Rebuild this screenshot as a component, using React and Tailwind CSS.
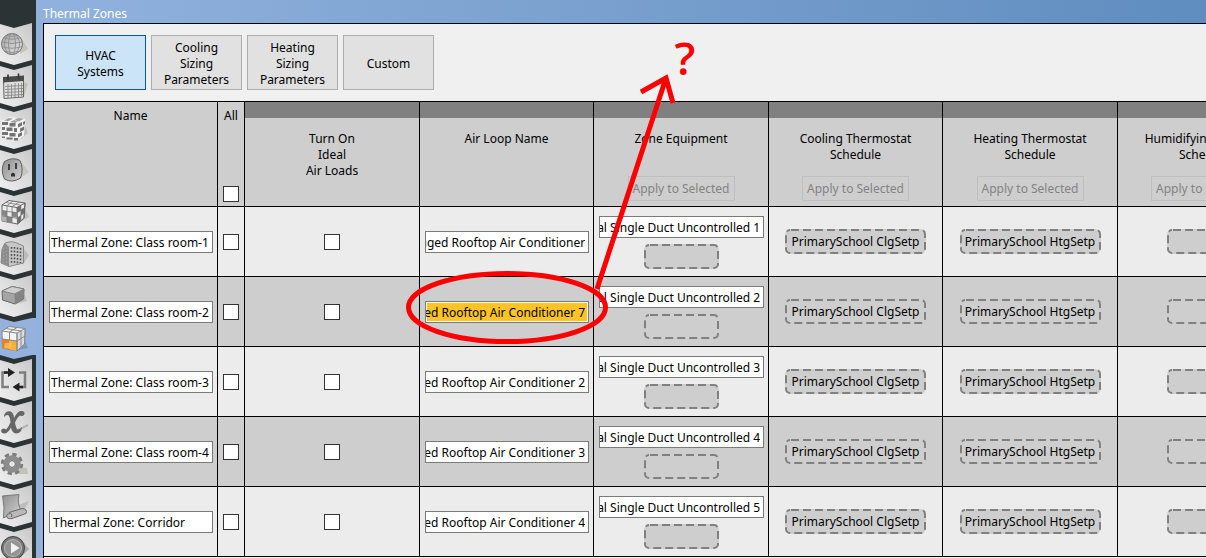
import { useEffect, useRef } from 'react'

const tabs = [
  { selected: true, lines: ['HVAC', 'Systems'] },
  { lines: ['Cooling', 'Sizing', 'Parameters'] },
  { lines: ['Heating', 'Sizing', 'Parameters'] },
  { lines: ['Custom'] }
]

const columns = [
  { title: ['Turn On', 'Ideal', 'Air Loads'], width: 'w-[175px]' },
  { title: ['Air Loop Name'], width: 'w-[174px]' },
  { title: ['Zone Equipment'], width: 'w-[175px]', apply: true },
  { title: ['Cooling Thermostat', 'Schedule'], width: 'w-[174px]', apply: true },
  { title: ['Heating Thermostat', 'Schedule'], width: 'w-[175px]', apply: true },
  { title: ['Humidifying Setpoint', 'Schedule'], width: 'w-[174px]', apply: true }
]

const rows = [
  { name: 'Thermal Zone: Class room-1', loop: 'Packaged Rooftop Air Conditioner', equipment: 'Air Terminal Single Duct Uncontrolled 1' },
  { name: 'Thermal Zone: Class room-2', loop: 'Packaged Rooftop Air Conditioner 7', equipment: 'Air Terminal Single Duct Uncontrolled 2', marked: true },
  { name: 'Thermal Zone: Class room-3', loop: 'Packaged Rooftop Air Conditioner 2', equipment: 'Air Terminal Single Duct Uncontrolled 3' },
  { name: 'Thermal Zone: Class room-4', loop: 'Packaged Rooftop Air Conditioner 3', equipment: 'Air Terminal Single Duct Uncontrolled 4' },
  { name: 'Thermal Zone: Corridor', loop: 'Packaged Rooftop Air Conditioner 4', equipment: 'Air Terminal Single Duct Uncontrolled 5' }
]

function GlobeIcon() {
  return (
    <g>
      <path d="M20 31 L28 26 L21 14Z" fill="#b9b9ac" opacity=".7" />
      <circle cx="12" cy="21" r="10.5" fill="url(#globe)" stroke="#777" />
      <g fill="none" stroke="#868686" strokeWidth=".8">
        <ellipse cx="12" cy="21" rx="3.5" ry="10.5" />
        <ellipse cx="12" cy="21" rx="7.5" ry="10.5" />
        <path d="M3.5 14.5Q12 18 20.5 14.5M2 19Q12 22 22 19M2 23.5Q12 27 22 23.5M4.5 28Q12 31 19.5 28M6 12.5Q12 14.5 18 12.5" />
      </g>
    </g>
  )
}

function CalendarIcon() {
  return (
    <g>
      <path d="M24 32 L28 19 L23 16Z" fill="#b9b9ac" opacity=".7" />
      <path d="M3.5 14L23.5 12L23.5 32L4 33.5Z" fill="#ddd" stroke="#666" />
      <path d="M3 12L24 10.5V16L3 17.5Z" fill="#4a4a4a" />
      <path d="M8 9.5v5M18.5 8.5v5" stroke="#333" strokeWidth="1.6" />
      <path d="M5 21.5L23 20.5M5 24.5L23 23.5M5 27.5L23 26.5M5 30.5L23 29.5M8 19v14M11.5 19v14M15 18v14M18.5 18v14M21.5 18v13" stroke="#808080" strokeWidth=".8" />
    </g>
  )
}

function BrickIcon() {
  return (
    <g>
      <path d="M21 32L28 26L24 16Z" fill="#aaa" opacity=".6" />
      <path d="M2 14L10 10L25 12L24 29L17 33L2 29Z" fill="#f3f3f3" />
      <path d="M2 15h6v3H2zM9.5 16h6v3.5h-6zM2 20h3v3H2zM6.5 20.5h6v3.5h-6zM14 21h3v4h-3zM2 25h6v3H2zM9.5 26h6v3.5h-6zM2 29.5h3v1.5H2zM6.5 30.5h6v2h-6zM18 17l4-2v3.5l-4 2zM23 15l2-1v3l-2 1zM18 27l4-2v3.5l-4 2zM20 21.5l4-2v3.5l-4 2zM14 31h4v2.5h-4z" fill="#747474" />
      <path d="M4 13.5l5-2.5 4 .8-5 2.5zM14.5 12l5-1 4 1-5 2.5zM10 15l4-2 4 1-3 2z" fill="#a2a2a2" />
    </g>
  )
}

function SocketIcon() {
  return (
    <g>
      <path d="M18 31L29 23L22 14Z" fill="#b9b9ac" opacity=".6" />
      <path d="M4.5 12.5Q13 7.5 20 11.5Q24 20 20.5 29Q12 34.5 4.5 30Q0 21 4.5 12.5Z" fill="url(#metal)" stroke="#5d5d5d" />
      <path d="M9 15v6M16 14v6" stroke="#333" strokeWidth="1.8" />
      <path d="M11 27.5V25q2-2.5 4 0v2.5z" fill="#333" />
    </g>
  )
}

function CubeIcon() {
  return (
    <g>
      <path d="M19 32L29 26L24 15Z" fill="#aaa" opacity=".6" />
      <path d="M2 14L9 9.5L25 12L24 27L17.5 33L2 30Z" fill="#ededed" stroke="#666" />
      <path d="M2 14L17 16.5L25 12L24 27L17.5 33L17 16.5" fill="none" stroke="#666" />
      <path d="M2 19.5l5 .8v5l-5-.8zM7 25.2l5 .8v6l-5-1zM12 20.7l5 .8v5l-5-.8z" fill="#858585" />
      <path d="M17 16.5l4-2.3v5l-4 2.8zM21 19l3.5-2.5-.3 5.5-3.2 2zM17.5 27l3.5-3v6l-3.5 3z" fill="#6e6e6e" />
      <path d="M2 24.5l5 .7v5.8l-5-1z" fill="#b4b4b4" />
      <path d="M2 19.5L17 21.8L24.5 16.8M2 24.8L17 27.3L24.3 22M7 14.8v16M12 15.5v16.5M20.8 14.5v15.5M6 11.5l15 2.7M13 10l-6 4.8M19 11l-7 4.7" fill="none" stroke="#777" strokeWidth=".8" />
    </g>
  )
}

function BuildingIcon() {
  return (
    <g>
      <path d="M23 32L29 22L23 15Z" fill="#aaa" opacity=".6" />
      <path d="M2 16L5 10Q12 7 19 11L23.5 13L23.5 30L9 33.5L1 30Z" fill="#c6c6c6" stroke="#777" strokeWidth=".8" />
      <path d="M2 16L5 10L9 14L9 33.5L1 30Z" fill="#8c8c8c" />
      <g stroke="#4c4c4c" strokeWidth="1.5" strokeDasharray="1.8 1.7">
        <path d="M11.5 14v17M14.5 14v17M17.5 14.5v16M20.5 15v15" />
      </g>
      <path d="M3.5 15v15M6.5 14v18" stroke="#a5a5a5" strokeDasharray="1.8 1.7" />
    </g>
  )
}

function BoxIcon() {
  return (
    <g>
      <path d="M16 29L27 26L24 18Z" fill="#aaa" opacity=".6" />
      <path d="M2 16L12 11.5L24 14L23.5 24L15 29L2.5 25Z" fill="#a5a5a5" stroke="#666" />
      <path d="M2 16L12 11.5L24 14L14.5 19Z" fill="#d0d0d0" stroke="#777" strokeWidth=".8" />
      <path d="M14.5 19L24 14L23.5 24L15 29Z" fill="#858585" />
    </g>
  )
}

function ZonesIcon() {
  return (
    <g>
      <path d="M18 33L28 31L24 22Z" fill="#6e8fb5" opacity=".7" />
      <path d="M2 14L9 9.5L25 11.5L24.5 27L17 34L2.5 31Z" fill="#f2f2f2" stroke="#888" />
      <path d="M9.5 23L17 24V34L9.5 32.5Z" fill="#f6ae3c" />
      <path d="M2.5 22L9.5 23V32.5L2.5 31Z" fill="#f08019" />
      <path d="M5 26L12 25.5L10.5 32L4 31Z" fill="#ffc95c" opacity=".7" />
      <path d="M17 16L25 11.5L24.5 27L17 34Z" fill="#dcdcdc" stroke="#888" />
      <path d="M2 14L17 16M2 22L17 24L25 19M9.5 15V23M17 16V34M21 14V30M9.5 15L17 10.5M6 11.5L21 14" fill="none" stroke="#888" />
    </g>
  )
}

function LoopIcon() {
  return (
    <g fill="none" strokeWidth="2.5">
      <path d="M2.5 25V13.5H7M19 13.5H25V28H21M9 28H2.5V23" stroke="#7e7e7e" />
      <path d="M4 13.5H9M18 28H23" stroke="#222" />
      <path d="M8 9L15 13.5L8 18ZM19.5 23.5L12.5 28L19.5 32.5Z" fill="#222" />
    </g>
  )
}

function VariableIcon() {
  return (
    <g>
      <path d="M18 29L28 24" stroke="#b5b5b5" strokeWidth="2" />
      <path d="M4 14.5Q6 9.5 10.5 10.5Q13.5 11.5 14 17Q17 11 20.5 10Q25 9.500 24.5 13Q23.5 16 20 14.500Q17.5 16 15 21.500Q16 28 18 28.500Q20 28.500 22 26Q21.500 32.500 16 32.500Q12 32 11 26.500Q8 32.500 4 32.500Q0 31.500 1.500 28.500Q3.500 26.500 6 28.500Q8.500 26 10.500 21.500Q10 14 7.500 14Q5.500 14 4 16Z" fill="#666" />
    </g>
  )
}

function GearIcon() {
  return (
    <g>
      <path d="M14 31L28 31L27 25L20 24Z" fill="#bdbcad" opacity=".8" />
      <circle cx="12" cy="21" r="9.5" fill="none" stroke="#7d7d7d" strokeWidth="3.500" strokeDasharray="4.200 3.260" />
      <circle cx="12" cy="21" r="6.2" fill="none" stroke="#8c8c8c" strokeWidth="5" />
      <circle cx="12" cy="21" r="3.4" fill="#e6e6e6" stroke="#666" />
    </g>
  )
}

function ScriptIcon() {
  return (
    <g>
      <path d="M18 20L29 16L24 25Z" fill="#aaa" opacity=".6" />
      <path d="M2.5 11L19 9.5Q17 18 20.5 24L9 30L3.5 33Q5 22 2.5 11Z" fill="url(#metal)" stroke="#777" />
      <path d="M9 27.5L22 23.5Q28 24 26 28.5L12 33.5Q7 34.5 6.5 31Q7 28 10.5 28.5Q13 29.5 11.5 32" fill="#b9b9b9" stroke="#666" />
    </g>
  )
}

function RunIcon() {
  return (
    <g>
      <path d="M21 30L29 22L22 14Z" fill="#999" opacity=".7" />
      <circle cx="13" cy="21" r="11.5" fill="#777" stroke="#444" />
      <circle cx="13" cy="21" r="8.5" fill="#949494" stroke="#b5b5b5" />
      <path d="M11 15.5L19.5 21L11 26.5Z" fill="#f2f2f2" />
    </g>
  )
}

const navItems = [
  { label: 'Site', Icon: GlobeIcon },
  { label: 'Schedules', Icon: CalendarIcon },
  { label: 'Constructions', Icon: BrickIcon },
  { label: 'Loads', Icon: SocketIcon },
  { label: 'Space Types', Icon: CubeIcon },
  { label: 'Building Stories', Icon: BuildingIcon },
  { label: 'Facility', Icon: BoxIcon },
  { label: 'Thermal Zones', Icon: ZonesIcon, active: true },
  { label: 'HVAC Systems', Icon: LoopIcon },
  { label: 'Variables', Icon: VariableIcon },
  { label: 'Simulation Settings', Icon: GearIcon },
  { label: 'Scripts', Icon: ScriptIcon },
  { label: 'Run Simulation', Icon: RunIcon }
]

function Sidebar() {
  return (
    <nav className="w-9 shrink-0 overflow-hidden bg-[#2c3335] pt-[23px]">
      <svg className="absolute size-0" aria-hidden="true">
        <defs>
          <linearGradient id="tab" x1="1" y1="0" x2="0" y2="1">
            <stop offset="0" stopColor="#c9c9c9" />
            <stop offset=".5" stopColor="#dedede" />
            <stop offset="1" stopColor="#efefef" />
          </linearGradient>
          <linearGradient id="metal" x1="0" y1="0" x2="1" y2="1">
            <stop offset="0" stopColor="#8f8f8f" />
            <stop offset="1" stopColor="#d2d2d2" />
          </linearGradient>
          <linearGradient id="globe" x1="0" y1="0" x2="1" y2="1">
            <stop offset="0" stopColor="#a8a8a8" />
            <stop offset="1" stopColor="#e2e2e2" />
          </linearGradient>
        </defs>
      </svg>
      {navItems.map(({ label, Icon, active }) => (
        <button key={label} type="button" aria-label={label} className="block">
          <svg width="36" height="42" viewBox="0 0 36 42">
            {active ? (
              <path d="M0 1L14 5L32 1H36V38H32L14 42L0 38Z" fill="#93b3de" />
            ) : (
              <path d="M0 1L14 5L32 0V37L14 42L0 38Z" fill="url(#tab)" />
            )}
            <Icon />
          </svg>
        </button>
      ))}
    </nav>
  )
}

// Long values are shown from their end, the way the field looks after typing
function TextField({ value, label, marked }) {
  const ref = useRef(null)

  useEffect(() => {
    ref.current.scrollLeft = ref.current.scrollWidth
  }, [value])

  return (
    <input
      ref={ref}
      type="text"
      aria-label={label}
      defaultValue={value}
      className={`block h-[22px] w-full border border-[#7a7a7a] pt-px pr-[3px] indent-[3px] outline-none ${
        marked ? 'bg-[#fdc424] shadow-[inset_0_0_0_1px_white]' : 'bg-white'
      }`}
    />
  )
}

function Checkbox({ label }) {
  return (
    <input
      type="checkbox"
      aria-label={label}
      className="block size-4 appearance-none border border-[#333] bg-white checked:bg-[#333]"
    />
  )
}

function DropZone({ text, label }) {
  return (
    <button
      type="button"
      aria-label={text ? undefined : label}
      className={`relative mx-auto block h-[25px] rounded-md bg-[#cecece] pt-px text-center ${text ? 'w-[141px]' : 'w-[75px]'}`}
    >
      <svg className="absolute inset-0 h-full w-full" aria-hidden="true">
        <rect x="1" y="1" width={text ? 139 : 73} height="23" rx="4" fill="none" stroke="#808080" strokeWidth="2" strokeDasharray="8 4" strokeDashoffset="-1" />
      </svg>
      <span className="relative">{text}</span>
    </button>
  )
}

function ZoneTable() {
  const cell = 'border-r border-b border-black p-0'

  return (
    <table className="w-[1248px] table-fixed border-separate border-spacing-0">
      <thead>
        <tr className="bg-[#cecece]">
          <th className={`${cell} w-[174px] font-normal`}>
            <div className="h-[104px] pt-[6px]">Name</div>
          </th>
          <th className={`${cell} w-[27px] font-normal`}>
            <div className="flex h-[104px] flex-col items-center justify-between pt-[6px] pb-1">
              All
              <Checkbox label="Select all zones" />
            </div>
          </th>
          {columns.map(col => (
            <th key={col.title[0]} className={`${cell} ${col.width} font-normal`}>
              <div className="flex h-[104px] flex-col items-center border-t-16 border-[#808080] pt-[13px] pb-[5px]">
                {col.title.map(line => (
                  <span key={line} className="whitespace-nowrap">{line}</span>
                ))}
                {col.apply && (
                  <button type="button" disabled className="mt-auto h-[25px] w-[107px] border border-[#bfbfbf] text-[#838383]">
                    Apply to Selected
                  </button>
                )}
              </div>
            </th>
          ))}
        </tr>
      </thead>
      <tbody>
        {rows.map(row => (
          <tr key={row.name} className="h-[70px] odd:bg-[#ececec] even:bg-[#cecece]">
            <td className={cell}>
              <div className="pr-1 pl-[5px]">
                <TextField label="Name" value={row.name} />
              </div>
            </td>
            <td className={cell}>
              <div className="flex justify-center">
                <Checkbox label={`Select ${row.name}`} />
              </div>
            </td>
            <td className={cell}>
              <div className="flex justify-center">
                <Checkbox label={`Ideal air loads for ${row.name}`} />
              </div>
            </td>
            <td className={cell}>
              <div className="pr-1 pl-[5px]">
                <TextField label="Air Loop Name" value={row.loop} marked={row.marked} />
              </div>
            </td>
            <td className={cell}>
              <div className="flex flex-col gap-[6px] pt-px pr-1 pl-[5px]">
                <TextField label="Zone Equipment" value={row.equipment} />
                <DropZone label="Add zone equipment" />
              </div>
            </td>
            <td className={cell}>
              <DropZone text="PrimarySchool ClgSetp" />
            </td>
            <td className={cell}>
              <DropZone text="PrimarySchool HtgSetp" />
            </td>
            <td className={cell}>
              <DropZone label="Add humidifying schedule" />
            </td>
          </tr>
        ))}
      </tbody>
    </table>
  )
}

function Annotation() {
  return (
    <svg className="pointer-events-none absolute top-0 left-0" width="720" height="360" viewBox="0 0 720 360" fill="none" stroke="#f00" strokeWidth="5">
      <ellipse cx="507" cy="307.5" rx="98.5" ry="34" />
      <path d="M597 289L666 78M641 92L666 78L673 103" />
      <text x="685" y="75" textAnchor="middle" fill="#f00" stroke="none" fontSize="46" fontWeight="600" fontFamily="'Open Sans', 'Noto Sans', sans-serif">?</text>
    </svg>
  )
}

export default function App() {
  return (
    <div className="relative flex h-screen overflow-hidden bg-linear-to-r from-[#93b3de] to-[#5f8dbf] font-['Noto_Sans',Tahoma,sans-serif] text-[12px] leading-4 text-black">
      <Sidebar />
      <main className="flex min-w-0 flex-1 flex-col pl-[7px]">
        <h1 className="h-[23px] pt-[6px] text-white">Thermal Zones</h1>
        <div className="flex-1 overflow-hidden border-t border-l border-black bg-[#f0f0f0]">
          <div className="flex gap-[5px] border-b border-black p-[11px]">
            {tabs.map(tab => (
              <button
                key={tab.lines[0]}
                type="button"
                className={`flex h-[55px] w-[91px] flex-col items-center justify-center border pt-[2px] ${
                  tab.selected ? 'border-[#0a569c] bg-[#cce4f7]' : 'border-[#adadad] bg-[#e1e1e1]'
                }`}
              >
                {tab.lines.map(line => (
                  <span key={line}>{line}</span>
                ))}
              </button>
            ))}
          </div>
          <ZoneTable />
        </div>
      </main>
      <Annotation />
    </div>
  )
}
